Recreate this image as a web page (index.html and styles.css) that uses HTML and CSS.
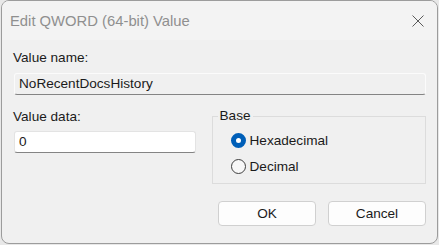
FILE: index.html
```html
<!DOCTYPE html>
<html>
<head>
<meta charset="utf-8">
<link rel="stylesheet" href="styles.css">
</head>
<body>
<div class="window">
  <div class="titlebar">
    <span class="title">Edit QWORD (64-bit) Value</span>
    <svg class="close" width="12" height="12" viewBox="0 0 12 12"><path d="M0.5 0.5 L11.5 11.5 M11.5 0.5 L0.5 11.5" stroke="#5a5a5a" stroke-width="1" fill="none"/></svg>
  </div>
  <div class="content">
    <div class="label first">Value name:</div>
    <div class="field readonly">NoRecentDocsHistory</div>
    <div class="row">
      <div class="col-left">
        <div class="label second">Value data:</div>
        <div class="field data">0</div>
      </div>
      <fieldset class="group">
        <legend>Base</legend>
        <label class="radio"><span class="dot checked"></span>Hexadecimal</label>
        <label class="radio"><span class="dot"></span>Decimal</label>
      </fieldset>
    </div>
    <div class="buttons">
      <button class="btn">OK</button>
      <button class="btn">Cancel</button>
    </div>
  </div>
</div>
</body>
</html>
```
FILE: styles.css
```css
* { box-sizing: border-box; }
html, body { margin: 0; padding: 0; }
body {
  width: 439px;
  height: 245px;
  background: #e8e8e8;
  font-family: "Liberation Sans", Arial, sans-serif;
  font-size: 13.6px;
  color: #1b1b1b;
  overflow: hidden;
}
.window {
  margin-left: 1px;
  width: 437px;
  height: 244px;
  border: 1px solid #9c9c9c;
  border-radius: 8px;
  background: #f0f0f0;
  overflow: hidden;
  display: flex;
  flex-direction: column;
}
.titlebar {
  height: 39px;
  flex: none;
  background: #f3f3f3;
  display: flex;
  align-items: center;
  justify-content: space-between;
  padding: 0 13px 0 8px;
}
.title {
  color: #8f8f8f;
  font-size: 14.8px;
}
.close { display: block; }
.content {
  padding: 0 11px 0 12px;
  display: flex;
  flex-direction: column;
}
.label {
  margin-left: -1px;
  height: 16px;
  line-height: 16px;
}
.label.first { margin-top: 10px; }
.field {
  height: 22px;
  line-height: 20px;
  padding-left: 4px;
  border: 1px solid #e3e3e3;
  border-bottom: 1px solid #848484;
  border-radius: 3px;
}
.field.readonly {
  margin-top: 7px;
  background: #f0f0f0;
  border-color: #fbfbfb;
  border-bottom-color: #848484;
}
.field.data {
  background: #ffffff;
  margin-top: 6px;
}
.row {
  display: flex;
  gap: 16px;
}
.col-left {
  width: 182px;
  padding-top: 14px;
}
.group {
  margin: 14px 0 0 0;
  width: 215px;
  height: 75px;
  border: 1px solid #dcdcdc;
  padding: 9px 0 0 18px;
  display: flex;
  flex-direction: column;
  gap: 10px;
}
.group legend {
  padding: 0 2px;
  margin-left: -13px;
  line-height: 14px;
}
.radio {
  display: flex;
  align-items: center;
  height: 16px;
}
.dot {
  width: 15px;
  height: 15px;
  border-radius: 50%;
  border: 1px solid #3f3f3f;
  background: #f8f8f8;
  margin-right: 4px;
  flex: none;
}
.dot.checked {
  border: 5px solid #005fb8;
  background: #ffffff;
}
.buttons {
  margin-top: 17px;
  display: flex;
  justify-content: flex-end;
  gap: 12px;
}
.btn {
  width: 98px;
  height: 25px;
  font-family: "Liberation Sans", Arial, sans-serif;
  font-size: 13.6px;
  color: #1b1b1b;
  background: #fdfdfd;
  border: 1px solid #d0d0d0;
  border-radius: 4px;
  padding: 0;
}
```
